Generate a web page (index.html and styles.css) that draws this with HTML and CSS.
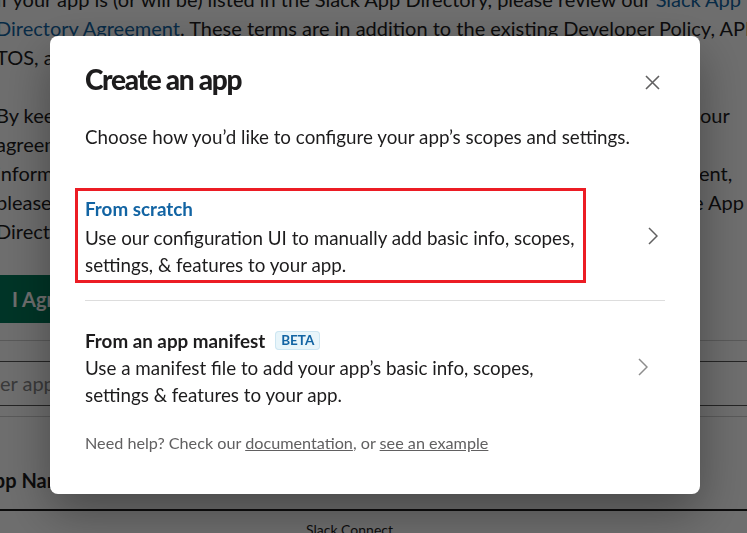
FILE: index.html
```html
<!DOCTYPE html>
<html lang="en">
<head>
    <meta charset="UTF-8">
    <meta name="viewport" content="width=device-width, initial-scale=1.0">
    <title>Create an app</title>
    <link rel="stylesheet" href="styles.css">
</head>
<body>

    <div class="page">
        <p class="para">If your app is (or will be) listed in the Slack App Directory, please review our <a href="#">Slack App<br>Directory Agreement</a>. These terms are in addition to the existing Developer Policy, API<br>TOS, and the Slack Terms of Service for your workspace.</p>
        <p class="para">By keeping your app installed, you confirm that you have read and agree to all of our<br>agreements and the policies that apply to apps built on Slack.<br>information about app review and listing is covered in our App Directory Agreement,<br>please see the guidelines and requirements for all the apps which are listed in the App<br>Directory.</p>
        <button class="agree">I Agree</button>
        <div class="rule"></div>
        <div class="filter">Filter apps by name</div>
        <div class="rule low"></div>
        <div class="table_head">App Name</div>
        <div class="table_row">Slack Connect</div>
    </div>

    <div class="overlay">
        <div class="modal">
            <div class="modal_head">
                <h1 class="modal_title">Create an app</h1>
                <button class="close" aria-label="Close">
                    <svg width="15" height="15" viewBox="0 0 15 15"><path d="M1 1l13 13M14 1L1 14" stroke="#616061" stroke-width="1.6" fill="none"/></svg>
                </button>
            </div>
            <p class="modal_sub">Choose how you’d like to configure your app’s scopes and settings.</p>

            <div class="option first">
                <div class="option_body selected">
                    <div class="option_title blue">From scratch</div>
                    <div class="option_desc">Use our configuration UI to manually add basic info, scopes, settings, &amp; features to your app.</div>
                </div>
                <svg class="chevron" width="10" height="18" viewBox="0 0 10 18"><path d="M1 1l8 8-8 8" stroke="#616061" stroke-width="1.5" fill="none"/></svg>
            </div>

            <div class="divider"></div>

            <div class="option second">
                <div class="option_body">
                    <div class="option_title">From an app manifest <span class="badge">BETA</span></div>
                    <div class="option_desc">Use a manifest file to add your app’s basic info, scopes, settings &amp; features to your app.</div>
                </div>
                <svg class="chevron" width="10" height="18" viewBox="0 0 10 18"><path d="M1 1l8 8-8 8" stroke="#8d8d8d" stroke-width="1.5" fill="none"/></svg>
            </div>

            <p class="help">Need help? Check our <a href="#">documentation</a>, or <a href="#">see an example</a></p>
        </div>
    </div>

</body>
</html>
```

FILE: styles.css
```css
body{
    margin: 0;
    overflow: hidden;
    background: #fff;
    font-family: Lato, "Noto Sans", sans-serif;
    color: #1d1c1d;
}
.page{
    margin-top: -15px;
    margin-left: -4px;
}
.para{
    margin: 0 0 29px;
    font-size: 20px;
    line-height: 29px;
    white-space: nowrap;
}
.para a{
    color: #1264a3;
    text-decoration: none;
}
.agree{
    display: block;
    margin: 2.5px 0 0 -2px;
    height: 48px;
    padding: 0 18px;
    border: 0;
    border-radius: 4px;
    background: #007a5a;
    color: #fff;
    font-family: inherit;
    font-size: 20px;
    font-weight: bold;
}
.rule{
    margin-top: 17px;
    border-top: 1px solid #cfcfcf;
}
.rule.low{
    margin-top: 10px;
}
.filter{
    margin: 20px 0 0 -30px;
    height: 43px;
    line-height: 43px;
    padding-left: 6px;
    border-top: 1px solid #555;
    border-bottom: 1px solid #555;
    font-size: 20px;
    color: #868686;
}
.table_head{
    margin: 49px 0 0 -16px;
    line-height: 29px;
    padding-bottom: 13.5px;
    border-bottom: 2px solid #1d1c1d;
    font-size: 20px;
    font-weight: bold;
}
.table_row{
    padding: 10px 0 0 310px;
    font-size: 14px;
}
.overlay{
    position: fixed;
    top: 0;
    left: 0;
    right: 0;
    bottom: 0;
    background: rgba(0, 0, 0, 0.57);
    display: flex;
    align-items: flex-start;
    padding: 36px 0 0 50px;
}
.modal{
    width: 650px;
    box-sizing: border-box;
    padding: 25px 35px 40px;
    background: #fff;
    border-radius: 8px;
    box-shadow: 0 18px 48px rgba(0, 0, 0, 0.35);
}
.modal_head{
    display: flex;
    justify-content: space-between;
    align-items: center;
}
.modal_title{
    margin: 0;
    font-size: 28px;
    line-height: 36px;
    font-weight: 900;
    letter-spacing: -1.3px;
}
.close{
    width: 26px;
    height: 26px;
    margin-top: 6px;
    padding: 0;
    border: 0;
    background: none;
    display: flex;
    justify-content: center;
    align-items: center;
}
.modal_sub{
    margin: 25.5px 0 0;
    font-size: 18.8px;
    line-height: 27px;
}
.option{
    display: flex;
    justify-content: space-between;
    align-items: center;
}
.option.first{
    margin-top: 38.5px;
}
.option.first .chevron{
    margin-right: 7px;
}
.option.second{
    padding-top: 25.5px;
}
.option.second .chevron{
    margin-right: 17px;
}
.option.second .option_body{
    width: 500px;
}
.option_body.selected{
    box-sizing: border-box;
    width: 511px;
    margin-left: -10px;
    padding: 3.5px 7px 2.5px;
    border: 3px solid #ec1c24;
}
.option_title{
    display: flex;
    align-items: center;
    font-size: 18.8px;
    line-height: 27px;
    font-weight: bold;
}
.option_title.blue{
    color: #1264a3;
}
.option_desc{
    font-size: 18.8px;
    line-height: 27px;
}
.selected .option_desc{
    margin-top: 2px;
}
.badge{
    margin-left: 10px;
    padding: 0 6px;
    height: 19px;
    line-height: 19px;
    border-radius: 4px;
    background: #e8f5fa;
    box-shadow: inset 0 0 0 1px #cde6f2;
    color: #1264a3;
    font-size: 13.5px;
    font-weight: bold;
}
.divider{
    margin-top: 17px;
    border-top: 1px solid #dddddd;
}
.help{
    margin: 24.5px 0 0;
    font-size: 16.2px;
    line-height: 22px;
    color: #616061;
}
.help a{
    color: #616061;
}
```
